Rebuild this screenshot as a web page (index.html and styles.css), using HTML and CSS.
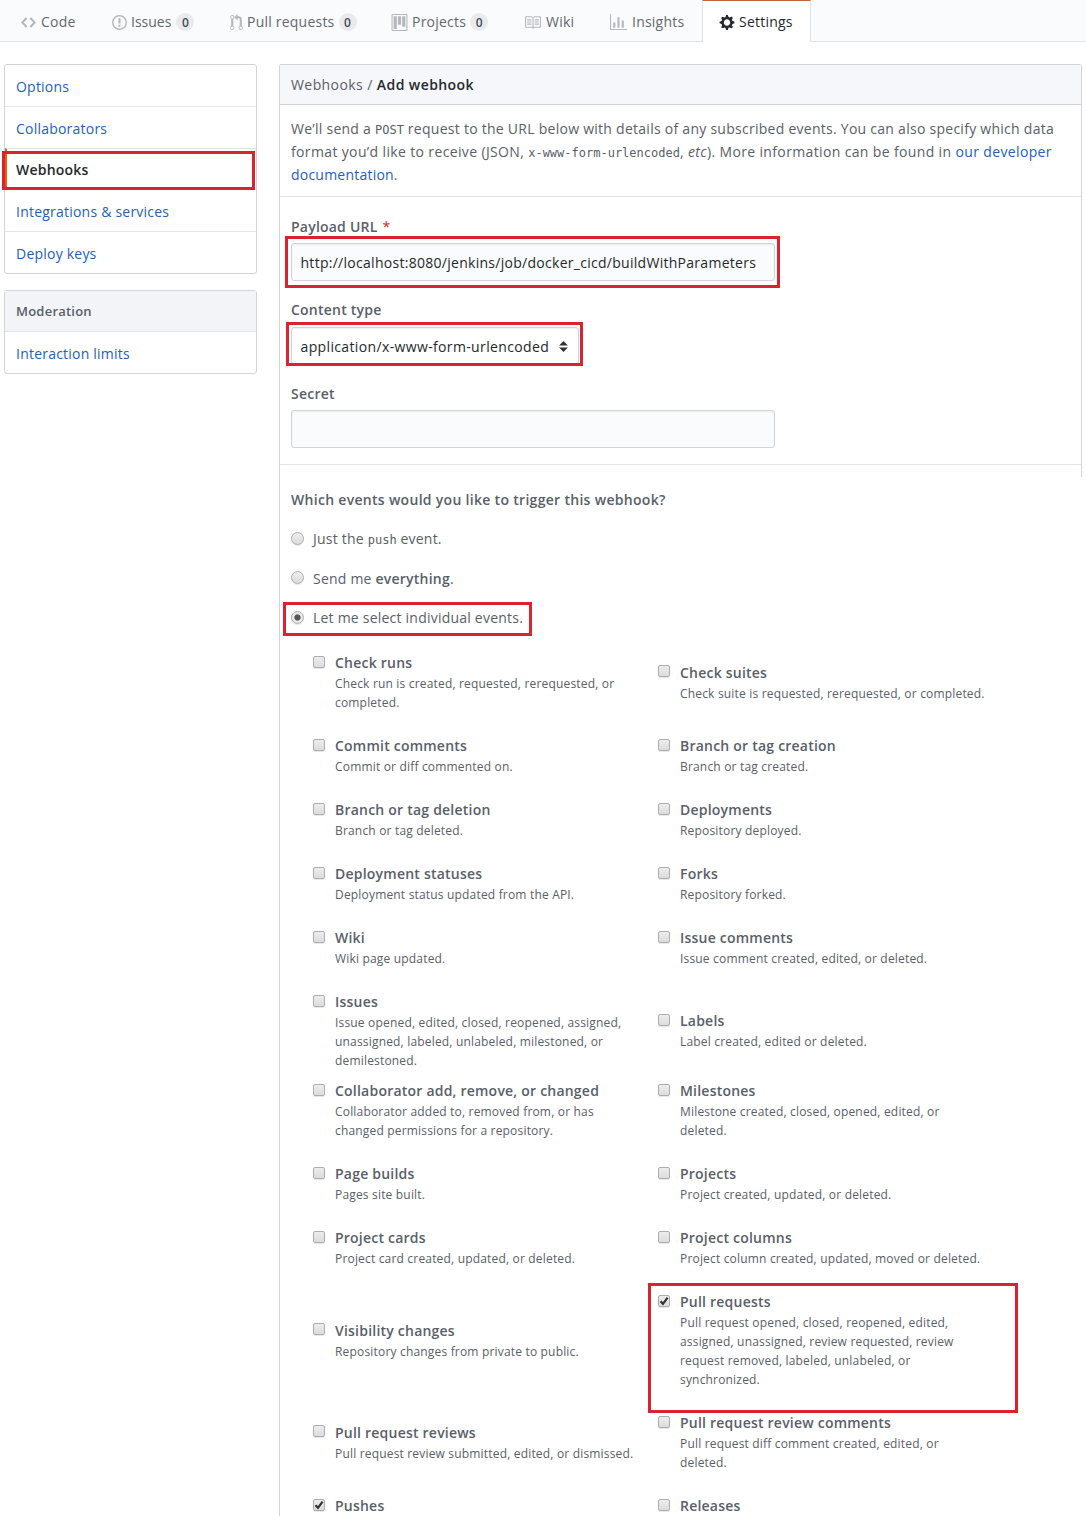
FILE: index.html
```html
<!DOCTYPE html>
<html lang="en">
<head>
<meta charset="utf-8">
<title>Add webhook</title>
<link rel="stylesheet" href="styles.css">
</head>
<body>
<nav class="tabs">
  <a class="tab"><svg class="ic ic-code" viewBox="0 0 14 16"><path d="M9.5 3L8 4.5 11.5 8 8 11.5 9.5 13 14 8 9.5 3zm-5 0L0 8l4.5 5L6 11.5 2.5 8 6 4.5 4.5 3z"/></svg><span>Code</span></a>
  <a class="tab"><svg class="ic ic-issue" viewBox="0 0 14 16"><path fill-rule="evenodd" d="M7 2.3c3.14 0 5.7 2.56 5.7 5.7s-2.56 5.7-5.7 5.7A5.71 5.71 0 0 1 1.3 8c0-3.14 2.56-5.7 5.7-5.7zM7 1C3.14 1 0 4.14 0 8s3.14 7 7 7 7-3.14 7-7-3.14-7-7-7zm1 3H6v5h2V4zm0 6H6v2h2v-2z"/></svg><span class="tight">Issues</span><b class="count">0</b></a>
  <a class="tab"><svg class="ic ic-pr" viewBox="0 0 12 16"><path fill-rule="evenodd" d="M11 11.28V5c-.03-.78-.34-1.47-.94-2.06C9.46 2.35 8.78 2.03 8 2H7V0L4 3l3 3V4h1c.27.02.48.11.69.31.21.2.3.42.31.69v6.28A1.993 1.993 0 0 0 10 15a1.993 1.993 0 0 0 1-3.72zm-1 2.92c-.66 0-1.2-.55-1.2-1.2 0-.65.55-1.2 1.2-1.2.65 0 1.2.55 1.2 1.2 0 .65-.55 1.2-1.2 1.2zM4 3c0-1.11-.89-2-2-2a1.993 1.993 0 0 0-1 3.72v6.56A1.993 1.993 0 0 0 2 15a1.993 1.993 0 0 0 1-3.72V4.72c.59-.34 1-.98 1-1.72zm-.8 10c0 .66-.55 1.2-1.2 1.2-.65 0-1.2-.55-1.2-1.2 0-.65.55-1.2 1.2-1.2.65 0 1.2.55 1.2 1.2zM2 4.2C1.34 4.2.8 3.65.8 3c0-.65.55-1.2 1.2-1.2.65 0 1.2.55 1.2 1.2 0 .65-.55 1.2-1.2 1.2z"/></svg><span>Pull requests</span><b class="count">0</b></a>
  <a class="tab"><svg class="ic ic-project" viewBox="0 0 15 16"><path fill-rule="evenodd" d="M10 12h3V2h-3v10zm-4-2h3V2H6v8zm-4 4h3V2H2v12zm-1 1h13V1H1v14zM14 0H1a1 1 0 0 0-1 1v14a1 1 0 0 0 1 1h13a1 1 0 0 0 1-1V1a1 1 0 0 0-1-1z"/></svg><span>Projects</span><b class="count">0</b></a>
  <a class="tab"><svg class="ic ic-book" viewBox="0 0 16 16"><path fill-rule="evenodd" d="M3 5h4v1H3V5zm0 3h4V7H3v1zm0 2h4V9H3v1zm11-5h-4v1h4V5zm0 2h-4v1h4V7zm0 2h-4v1h4V9zm2-6v9c0 .55-.45 1-1 1H9.5l-1 1-1-1H2c-.55 0-1-.45-1-1V3c0-.55.45-1 1-1h5.5l1 1 1-1H15c.55 0 1 .45 1 1zm-8 .5L7.5 3H2v9h6V3.5zm7-.5H9.5l-.5.5V12h6V3z"/></svg><span>Wiki</span></a>
  <a class="tab"><svg class="ic ic-graph" viewBox="0 0 16 16"><path d="M16 14v1H0V0h1v14h15zM5 13H3V8h2v5zm4 0H7V3h2v10zm4 0h-2V6h2v7z"/></svg><span>Insights</span></a>
  <a class="tab selected"><svg class="ic ic-gear" viewBox="0 0 14 16"><path fill-rule="evenodd" d="M14 8.77v-1.6l-1.94-.64-.45-1.09.88-1.84-1.13-1.13-1.81.91-1.09-.45-.69-1.92h-1.6l-.63 1.94-1.11.45-1.84-.88-1.13 1.13.91 1.81-.45 1.09L0 7.23v1.59l1.94.64.45 1.09-.88 1.84 1.13 1.13 1.81-.91 1.09.45.69 1.92h1.59l.63-1.94 1.11-.45 1.84.88 1.13-1.13-.92-1.81.47-1.09L14 8.75v.02zM7 11c-1.66 0-3-1.34-3-3s1.34-3 3-3 3 1.34 3 3-1.34 3-3 3z"/></svg><span>Settings</span></a>
</nav>
<div class="page">
  <aside class="side">
    <div class="menu marked-host">
      <a>Options</a>
      <a>Collaborators</a>
      <a class="current">Webhooks</a>
      <a>Integrations &amp; services</a>
      <a>Deploy keys</a>
      <i class="mark mark-webhooks"></i>
    </div>
    <div class="menu">
      <h3>Moderation</h3>
      <a>Interaction limits</a>
    </div>
  </aside>
  <main class="main">
    <div class="upper">
      <header class="crumb"><span>Webhooks / </span><b>Add webhook</b></header>
      <p class="intro"><span class="l1">We’ll send a <code>POST</code> request to the URL below with details of any subscribed events. You can also specify which data</span><br><span class="l2">format you’d like to receive (JSON, <code>x-www-form-urlencoded</code>, <em>etc</em>). More information can be found in <a>our developer</a></span><br><a>documentation</a>.</p>
      <form class="fields">
        <label>Payload URL <span class="req">*</span></label>
        <div class="control"><div class="input url">http://localhost:8080/jenkins/job/docker_cicd/buildWithParameters</div><i class="mark mark-url"></i></div>
        <label class="type-label">Content type</label>
        <div class="control"><div class="select"><span>application/x-www-form-urlencoded</span><svg class="arrows" viewBox="0 0 8 10"><path d="M4 0L8 4H0zM0 6h8L4 10z"/></svg></div><i class="mark mark-type"></i></div>
        <label>Secret</label>
        <div class="input"></div>
      </form>
    </div>
    <section class="lower">
      <h4>Which events would you like to trigger this webhook?</h4>
      <div class="radio"><input type="radio" name="ev"><span>Just the <code>push</code> event.</span></div>
      <div class="radio raised"><input type="radio" name="ev"><span>Send me <b>everything</b>.</span></div>
      <div class="radio"><input type="radio" name="ev" checked><span>Let me select individual events.</span><i class="mark mark-radio"></i></div>
      <div class="events">
        <div class="event"><input type="checkbox"><b>Check runs</b><p>Check run is created, requested, rerequested, or<br>completed.</p></div>
        <div class="event down10"><input type="checkbox"><b>Check suites</b><p>Check suite is requested, rerequested, or completed.</p></div>
        <div class="event"><input type="checkbox"><b>Commit comments</b><p>Commit or diff commented on.</p></div>
        <div class="event"><input type="checkbox"><b>Branch or tag creation</b><p>Branch or tag created.</p></div>
        <div class="event"><input type="checkbox"><b>Branch or tag deletion</b><p>Branch or tag deleted.</p></div>
        <div class="event"><input type="checkbox"><b>Deployments</b><p>Repository deployed.</p></div>
        <div class="event"><input type="checkbox"><b>Deployment statuses</b><p>Deployment status updated from the API.</p></div>
        <div class="event"><input type="checkbox"><b>Forks</b><p>Repository forked.</p></div>
        <div class="event"><input type="checkbox"><b>Wiki</b><p>Wiki page updated.</p></div>
        <div class="event"><input type="checkbox"><b>Issue comments</b><p>Issue comment created, edited, or deleted.</p></div>
        <div class="event"><input type="checkbox"><b>Issues</b><p>Issue opened, edited, closed, reopened, assigned,<br>unassigned, labeled, unlabeled, milestoned, or<br>demilestoned.</p></div>
        <div class="event down19"><input type="checkbox"><b>Labels</b><p>Label created, edited or deleted.</p></div>
        <div class="event"><input type="checkbox"><b>Collaborator add, remove, or changed</b><p>Collaborator added to, removed from, or has<br>changed permissions for a repository.</p></div>
        <div class="event"><input type="checkbox"><b>Milestones</b><p>Milestone created, closed, opened, edited, or<br>deleted.</p></div>
        <div class="event"><input type="checkbox"><b>Page builds</b><p>Pages site built.</p></div>
        <div class="event"><input type="checkbox"><b>Projects</b><p>Project created, updated, or deleted.</p></div>
        <div class="event"><input type="checkbox"><b>Project cards</b><p>Project card created, updated, or deleted.</p></div>
        <div class="event"><input type="checkbox"><b>Project columns</b><p>Project column created, updated, moved or deleted.</p></div>
        <div class="event down29"><input type="checkbox"><b>Visibility changes</b><p>Repository changes from private to public.</p></div>
        <div class="event"><input type="checkbox" checked><b>Pull requests</b><p>Pull request opened, closed, reopened, edited,<br>assigned, unassigned, review requested, review<br>request removed, labeled, unlabeled, or<br>synchronized.</p><i class="mark mark-pr"></i></div>
        <div class="event down10"><input type="checkbox"><b>Pull request reviews</b><p>Pull request review submitted, edited, or dismissed.</p></div>
        <div class="event"><input type="checkbox"><b>Pull request review comments</b><p>Pull request diff comment created, edited, or<br>deleted.</p></div>
        <div class="event"><input type="checkbox" checked><b>Pushes</b></div>
        <div class="event"><input type="checkbox"><b>Releases</b></div>
      </div>
    </section>
  </main>
</div>
</body>
</html>
```

FILE: styles.css
```css
* { box-sizing: border-box; }
body { margin: 0; height: 1516px; overflow: hidden; background: #fff; color: #586069; font: 14px/21px "Open Sans", "Noto Sans", sans-serif; letter-spacing: .22px; white-space: nowrap; }
b, h3, h4, label { font-weight: 600; }
a { color: #2361b8; }
i.mark { position: absolute; border: 3px solid #d9232e; pointer-events: none; }

.tabs { display: grid; grid-template-columns: 91px 118px 161px 133px 86px 108px 109px; height: 42px; padding-left: 5px; background: #fafbfc; border-bottom: 1px solid #dfe2e6; }
.tab { display: flex; align-items: center; height: 42px; padding: 2px 0 0 16px; color: #62686f; }
.tab span { margin-top: -2px; }
.tab .tight { letter-spacing: 0; }
.tab.selected { padding-top: 1px; background: #fff; border: 1px solid #dfe2e6; border-top-color: #c0683c; border-bottom: 0; color: #24292e; }
.ic { flex: none; height: 17px; fill: #b4b8bd; }
.ic-code { width: 15px; margin-right: 5px; }
.ic-issue { width: 15px; margin-right: 4px; }
.ic-pr { width: 13px; margin-right: 4px; }
.ic-project { width: 17px; margin-right: 4px; }
.ic-book, .ic-graph { width: 17px; margin-right: 5px; }
.ic-gear { width: 16px; margin-right: 4px; fill: #24292e; }
.count { width: 18px; height: 18px; margin-left: 4px; border-radius: 9px; background: #e8eaec; color: #444d56; font-size: 12px; line-height: 19px; letter-spacing: 0; text-align: center; }
.tight + .count { margin-left: 5px; }

.page { display: flex; gap: 22px; padding: 22px 4px 0; }
.side { width: 253px; display: flex; flex-direction: column; gap: 16px; }
.menu { border: 1px solid #d1d5da; border-radius: 3px; }
.marked-host { position: relative; }
.menu a { display: block; height: 42px; padding-left: 11px; border-top: 1px solid #e1e4e8; line-height: 43px; }
.menu > a:first-child { border-top: 0; height: 41px; line-height: 43px; }
.menu a.current { height: 41px; padding-left: 9px; border-left: 2px solid #e36209; color: #24292e; font-weight: 600; line-height: 41px; }
.menu h3 { margin: 0; height: 40px; padding-left: 11px; background: #f3f4f8; font-size: 13px; line-height: 40px; }
.mark-webhooks { left: -3px; top: 86px; width: 253px; height: 39px; }

.main { flex: 1; height: 1452px; border-left: 1px solid #d1d5da; border-top-left-radius: 3px; }
.upper { height: 413px; border-top: 1px solid #d1d5da; border-right: 1px solid #d1d5da; border-top-right-radius: 3px; }
.crumb { height: 40px; padding-left: 11px; background: #f6f7fa; border-bottom: 1px solid #d1d5da; line-height: 39px; letter-spacing: .42px; white-space: pre; }
.crumb b { color: #24292e; }
.intro { margin: 0; height: 92px; padding: 12px 11px 0; border-bottom: 1px solid #e1e4e8; line-height: 23px; }
.l1 { letter-spacing: .265px; }
.l2 { letter-spacing: .36px; }
code { font: 12px "DejaVu Sans Mono", monospace; letter-spacing: 0; }
.fields { height: 268px; padding: 19px 11px 0; border-bottom: 1px solid #e1e4e8; }
.fields label { display: block; height: 27px; line-height: 21px; }
.fields .type-label { height: 28px; }
.req { margin-left: 1px; color: #cb2431; font-weight: 400; }
.control { position: relative; height: 56px; }
.input { width: 484px; height: 38px; padding-left: 8.5px; border: 1px solid #d1d5da; border-radius: 3px; background: #fafbfc; box-shadow: inset 0 1px 2px rgba(27,31,35,.07); color: #24292e; line-height: 37px; letter-spacing: .28px; }
.select { display: flex; align-items: center; justify-content: space-between; width: 288px; height: 38px; padding: 0 10px 0 8.5px; border: 1px solid #d1d5da; border-radius: 3px; box-shadow: inset 0 1px 2px rgba(27,31,35,.07); color: #24292e; letter-spacing: .36px; }
.arrows { width: 9px; height: 11px; fill: #333; }
.mark-url { left: -6px; top: -7px; width: 495px; height: 52px; }
.mark-type { left: -5px; top: -5px; width: 297px; height: 44px; }

.lower { padding: 12px 0 0 11px; }
h4 { margin: 0 0 18px; font-size: 14px; line-height: 21px; letter-spacing: .3px; }
.radio { position: relative; display: flex; align-items: center; gap: 9px; height: 21px; margin-bottom: 18.5px; }
.radio.raised input { margin-bottom: 2px; }
input { appearance: none; flex: none; margin: 0; width: 12px; height: 12px; border: 1px solid #adadad; border-radius: 2px; background: linear-gradient(#ededed, #dcdcdc); box-shadow: 0 1px 1px rgba(0,0,0,.1); }
input[type=radio] { width: 13px; height: 13px; border-radius: 50%; }
input[type=radio]:checked { background: radial-gradient(circle, #555 0 2.7px, #e8e8e8 3.5px); }
.mark-radio { left: -8px; top: -5px; width: 249px; height: 34px; }
.events { display: grid; grid-template-columns: 345px 345px; grid-template-rows: 83px 64px 64px 64px 64px 89px 83px 64px 64px 121px 83px 64px; margin: 24px 0 0 22px; }
.event { position: relative; padding-left: 22px; }
.event input { position: absolute; left: 0; top: 4px; }
.event b { display: block; line-height: 21px; }
.event p { margin: 1px 0 0; font-size: 12px; line-height: 19px; letter-spacing: .18px; }
.event.down10 { margin-top: 10px; }
.event.down19 { margin-top: 19px; }
.event.down29 { margin-top: 29px; }
.event.down29 input, .event.down10 input { top: 3px; }
input[type=checkbox]:checked { background: url("data:image/svg+xml,%3Csvg xmlns='http://www.w3.org/2000/svg' viewBox='0 0 10 10'%3E%3Cpath d='M1.5 5.2L4 7.8 8.6 1.6' fill='none' stroke='%23333' stroke-width='2.2'/%3E%3C/svg%3E") center/10px 10px, linear-gradient(#ededed, #dcdcdc); }
.mark-pr { left: -10px; top: -8px; width: 370px; height: 130px; }
```
